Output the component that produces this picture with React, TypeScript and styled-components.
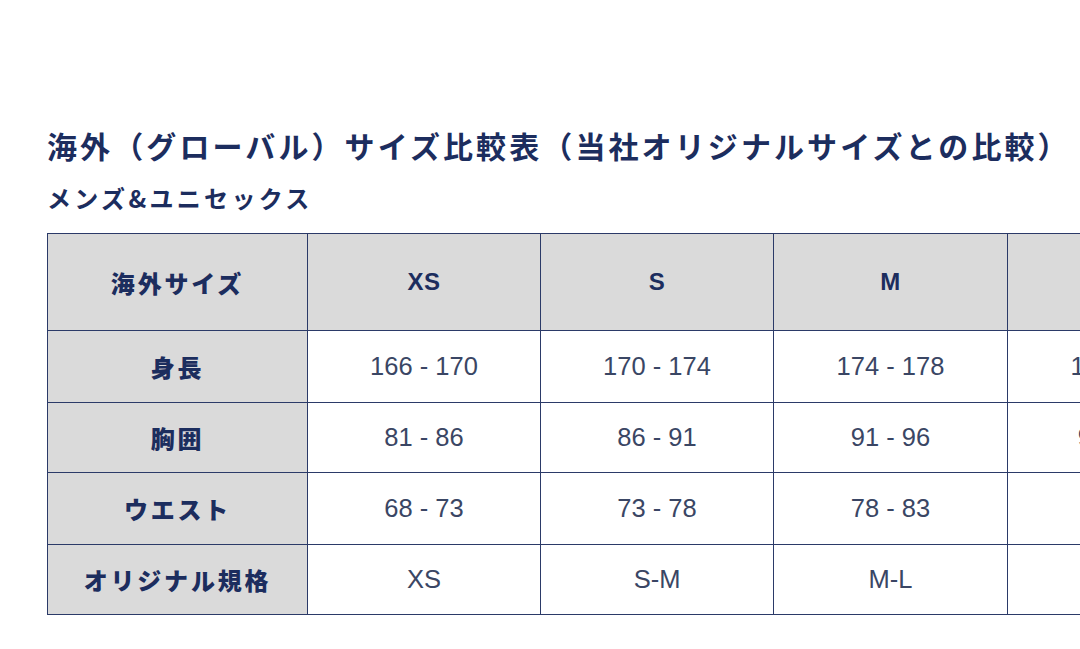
import React from "react";
import styled, { createGlobalStyle } from "styled-components";

const GlobalStyle = createGlobalStyle`
  html, body {
    margin: 0;
    padding: 0;
    background: #ffffff;
    overflow: hidden;
  }
  body {
    font-family: "Noto Sans CJK JP", "Noto Sans", sans-serif;
  }
`;

const NAVY = "#1c2d5e";

const Page = styled.main`
  width: 1080px;
  height: 649px;
  padding: 125px 0 0 47px;
  box-sizing: border-box;
  display: flex;
  flex-direction: column;
`;

const Title = styled.h1`
  margin: 0;
  font-family: "Noto Sans CJK JP", sans-serif;
  font-weight: 700;
  font-size: 30px;
  line-height: 40px;
  letter-spacing: 3.1px;
  color: ${NAVY};
  white-space: nowrap;
`;

const Subtitle = styled.h2`
  margin: 17px 0 0 0;
  font-family: "Noto Sans CJK JP", sans-serif;
  font-weight: 700;
  font-size: 24px;
  line-height: 32px;
  letter-spacing: 3.3px;
  color: ${NAVY};
  white-space: nowrap;
`;

const Table = styled.table`
  margin-top: 19px;
  border-collapse: collapse;
  table-layout: fixed;
  width: 1194px;
  flex-shrink: 0;
`;

const Row = styled.tr<{ $h: number }>`
  height: ${(p) => p.$h}px;
`;

const HeadCell = styled.th<{ $latin?: boolean }>`
  border: 1.5px solid #2b3a68;
  background: #dadada;
  color: ${NAVY};
  font-family: ${(p) =>
    p.$latin
      ? `"Liberation Sans", Arial, sans-serif`
      : `"Noto Sans CJK JP", sans-serif`};
  font-weight: ${(p) => (p.$latin ? 700 : 900)};
  font-size: 24px;
  letter-spacing: ${(p) => (p.$latin ? "0.5px" : "2.8px")};
  text-align: center;
  vertical-align: middle;
  padding: 0;
`;

const DataCell = styled.td`
  border: 1.5px solid #2b3a68;
  background: #ffffff;
  color: #3a4664;
  font-family: "Liberation Sans", Arial, "Noto Sans CJK JP", sans-serif;
  font-weight: 400;
  font-size: 25.5px;
  text-align: center;
  vertical-align: middle;
  padding: 0;
`;

const widths = [260, 233, 233, 234, 234];

const header = ["XS", "S", "M", "L"];
const rows: { label: string; h: number; values: string[] }[] = [
  { label: "身長", h: 72, values: ["166 - 170", "170 - 174", "174 - 178", "178 - 182"] },
  { label: "胸囲", h: 70, values: ["81 - 86", "86 - 91", "91 - 96", "96 - 101"] },
  { label: "ウエスト", h: 72, values: ["68 - 73", "73 - 78", "78 - 83", "83 - 88"] },
  { label: "オリジナル規格", h: 70, values: ["XS", "S-M", "M-L", "L-XL"] },
];

export default function App() {
  return (
    <>
      <GlobalStyle />
      <Page>
        <Title>海外（グローバル）サイズ比較表（当社オリジナルサイズとの比較）</Title>
        <Subtitle>メンズ&amp;ユニセックス</Subtitle>
        <Table>
          <colgroup>
            {widths.map((w, i) => (
              <col key={i} style={{ width: w }} />
            ))}
          </colgroup>
          <thead>
            <Row $h={97}>
              <HeadCell>海外サイズ</HeadCell>
              {header.map((h) => (
                <HeadCell key={h} $latin>
                  {h}
                </HeadCell>
              ))}
            </Row>
          </thead>
          <tbody>
            {rows.map((r) => (
              <Row key={r.label} $h={r.h}>
                <HeadCell as="th" scope="row">
                  {r.label}
                </HeadCell>
                {r.values.map((v, i) => (
                  <DataCell key={i}>{v}</DataCell>
                ))}
              </Row>
            ))}
          </tbody>
        </Table>
      </Page>
    </>
  );
}
